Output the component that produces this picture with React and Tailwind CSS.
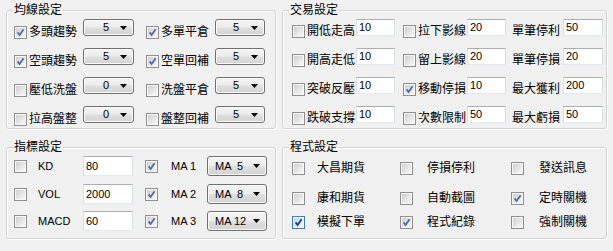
function Check({ on, focus }) {
  return (
    <span
      className={`flex h-[13px] w-[13px] shrink-0 border p-[1px] ${
        focus ? 'border-[#3c7fb1] bg-[#eef5fb]' : 'border-[#8f8f8f] bg-[#f7f7f7]'
      }`}
    >
      <span
        className={`relative flex h-full w-full items-center justify-center ${
          focus
            ? 'bg-[linear-gradient(135deg,#bcd6ee,#f3f8fd)]'
            : 'bg-[linear-gradient(135deg,#cfcfcf,#f8f8f8)]'
        }`}
      >
        {on && (
          <svg className="absolute" width="9" height="9" viewBox="0 0 9 9">
            <path
              d="M1.6 4.4 L3.6 7 L7.6 1.3"
              fill="none"
              stroke={focus ? '#1b3a8c' : '#5468a6'}
              strokeWidth="1.8"
            />
          </svg>
        )}
      </span>
    </span>
  );
}

function Arrow() {
  return (
    <svg className="ml-auto mr-[6px] shrink-0" width="7" height="4" viewBox="0 0 7 4">
      <path d="M0 0h7L3.5 4z" fill="#000" />
    </svg>
  );
}

function Combo({ value, className }) {
  return (
    <div
      className={`flex shrink-0 items-center whitespace-pre rounded-[3px] border border-[#707070] bg-[linear-gradient(#f4f4f4,#ececec_48%,#dfdfdf_52%,#d2d2d2)] text-[11px] leading-none shadow-[inset_0_0_0_1px_#fbfbfb] ${className}`}
    >
      <span>{value}</span>
      <Arrow />
    </div>
  );
}

function Field({ value, className }) {
  return (
    <div
      className={`flex shrink-0 items-center border border-[#abadb3] border-x-[#dbdfe6] border-b-[#e3e9ef] bg-white pl-[2px] text-[11px] leading-none ${className}`}
    >
      {value}
    </div>
  );
}

function CheckLabel({ text, on, className }) {
  return (
    <div className={`flex h-[14px] shrink-0 items-center ${className}`}>
      <Check on={on} />
      <span className="ml-[2px] text-[12px] leading-[14px]">{text}</span>
    </div>
  );
}

function Group({ title, children, className }) {
  return (
    <fieldset
      className={`rounded-[3px] border border-[#d3d3d3] shadow-[inset_1px_1px_0_#fff,1px_1px_0_#fff] ${className}`}
    >
      <legend className="ml-[6px] px-[1px] text-[12px] leading-[14px]">{title}</legend>
      {children}
    </fieldset>
  );
}

const maRows = [
  ['多頭趨勢', true, '5', '多單平倉', true, '5'],
  ['空頭趨勢', true, '5', '空單回補', true, '5'],
  ['壓低洗盤', false, '0', '洗盤平倉', false, '5'],
  ['拉高盤整', false, '0', '盤整回補', false, '5'],
];

const tradeRows = [
  ['開低走高', false, '10', '拉下影線', false, '20', '單筆停利', '50'],
  ['開高走低', false, '10', '留上影線', false, '20', '單筆停損', '20'],
  ['突破反壓', false, '10', '移動停損', true, '10', '最大獲利', '200'],
  ['跌破支撐', false, '10', '次數限制', false, '50', '最大虧損', '50'],
];

const indRows = [
  ['KD', '80', 'MA 1', 'MA  5', ''],
  ['VOL', '2000', 'MA 2', 'MA  8', 'mt-[8px]'],
  ['MACD', '60', 'MA 3', 'MA 12', 'mt-[7px]'],
];

const progRows = [
  [['大昌期貨', false], ['停損停利', false], ['發送訊息', false], ''],
  [['康和期貨', false], ['自動截圖', false], ['定時關機', true], 'mt-[16px]'],
  [['模擬下單', true, true], ['程式紀錄', true], ['強制關機', false], 'mt-[10px]'],
];

export default function App() {
  return (
    <div className="grid h-[251px] w-[613px] grid-cols-[270px_325px] grid-rows-[126px_99px] gap-x-[6px] gap-y-[11px] bg-[#f0f0f0] pl-[6px] pt-[3px] font-['Liberation_Sans','Noto_Sans_CJK_TC',sans-serif] text-black">
      <Group title="均線設定">
        <div className="flex flex-col gap-y-[12px] pt-[2px]">
          {maRows.map((r) => (
            <div key={r[0]} className="flex h-[17px] items-start pl-[7px]">
              <CheckLabel text={r[0]} on={r[1]} className="mt-[6px] w-[69px]" />
              <Combo value={r[2]} className="h-[17px] w-[51px] pl-[19px]" />
              <CheckLabel text={r[3]} on={r[4]} className="ml-[12px] mt-[6px] w-[69px]" />
              <Combo value={r[5]} className="h-[17px] w-[50px] pl-[17px]" />
            </div>
          ))}
        </div>
      </Group>

      <Group title="交易設定">
        <div className="flex flex-col gap-y-[12px] pt-[2px]">
          {tradeRows.map((r) => (
            <div key={r[0]} className="flex h-[17px] items-start pl-[9px]">
              <CheckLabel text={r[0]} on={r[1]} className="mt-[5px] w-[63px]" />
              <Field value={r[2]} className="ml-[1px] h-[17px] w-[39px]" />
              <CheckLabel text={r[3]} on={r[4]} className="ml-[8px] mt-[5px] w-[63px]" />
              <Field value={r[5]} className="ml-[1px] h-[17px] w-[39px]" />
              <span className="ml-[6px] mt-[5px] w-[48px] text-[12px] leading-[14px]">{r[6]}</span>
              <Field value={r[7]} className="ml-[3px] h-[17px] w-[40px]" />
            </div>
          ))}
        </div>
      </Group>

      <Group title="指標設定">
        <div className="flex flex-col pt-[2px]">
          {indRows.map((r) => (
            <div key={r[0]} className={`flex h-[20px] items-center pl-[7px] ${r[4]}`}>
              <Check />
              <span className="ml-[11px] w-[45px] text-[11px]">{r[0]}</span>
              <Field value={r[1]} className="h-[20px] w-[50px]" />
              <span className="ml-[12px]">
                <Check on />
              </span>
              <span className="ml-[13px] w-[36px] text-[11px]">{r[2]}</span>
              <Combo value={r[3]} className="h-[20px] w-[60px] pl-[7px]" />
            </div>
          ))}
        </div>
      </Group>

      <Group title="程式設定">
        <div className="flex flex-col pt-[7px]">
          {progRows.map((r) => (
            <div key={r[0][0]} className={`flex h-[14px] items-center pl-[9px] ${r[3]}`}>
              <div className="flex w-[108px] items-center">
                <Check on={r[0][1]} focus={r[0][2]} />
                <span className="ml-[12px] text-[12px] leading-[14px]">{r[0][0]}</span>
              </div>
              <div className="flex w-[111px] items-center">
                <Check on={r[1][1]} />
                <span className="ml-[14px] text-[12px] leading-[14px]">{r[1][0]}</span>
              </div>
              <div className="flex items-center">
                <Check on={r[2][1]} />
                <span className="ml-[15px] text-[12px] leading-[14px]">{r[2][0]}</span>
              </div>
            </div>
          ))}
        </div>
      </Group>
    </div>
  );
}
